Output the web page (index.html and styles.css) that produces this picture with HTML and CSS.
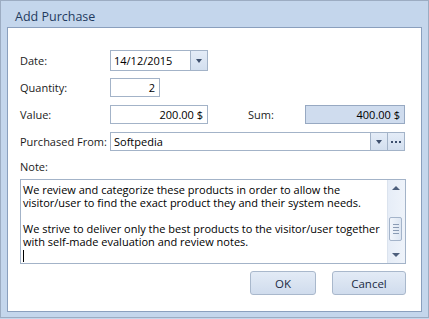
FILE: index.html
```html
<!DOCTYPE html>
<html>
  <head>
    <meta charset="UTF-8">
    <title>Add Purchase</title>
    <link rel="stylesheet" href="styles.css">
  </head>

  <body>
    <div class="window">
      <div class="title">Add Purchase</div>

      <div class="panel">

        <div class="row row-date">
          <label class="lbl">Date:</label>
          <div class="box combo date">
            <span class="val">14/12/2015</span>
            <span class="btn drop"><i class="tri"></i></span>
          </div>
        </div>

        <div class="row">
          <label class="lbl">Quantity:</label>
          <div class="box num qty">2</div>
        </div>

        <div class="row">
          <label class="lbl">Value:</label>
          <div class="box num value">200.00 $</div>
          <label class="lbl-sum">Sum:</label>
          <div class="box num sum">400.00 $</div>
        </div>

        <div class="row">
          <label class="lbl">Purchased From:</label>
          <div class="box combo from">
            <span class="val">Softpedia</span>
            <span class="btn drop"><i class="tri"></i></span>
            <span class="btn more"><i></i><i></i><i></i></span>
          </div>
        </div>

        <div class="row row-note">
          <label class="lbl">Note:</label>
        </div>

        <div class="note">
          <div class="note-text">
            <p>We review and categorize these products in order to allow the visitor/user to find the exact product they and their system needs.</p>
            <p>&nbsp;</p>
            <p>We strive to deliver only the best products to the visitor/user together with self-made evaluation and review notes.</p>
            <p><span class="caret"></span></p>
          </div>
          <div class="scroll">
            <span class="arrow up"></span>
            <span class="thumb"><i></i><i></i><i></i><i></i></span>
            <span class="arrow down"></span>
          </div>
        </div>

        <div class="actions">
          <button class="button ok">OK</button>
          <button class="button cancel">Cancel</button>
        </div>
      </div>
    </div>
  </body>
</html>
```

FILE: styles.css
```css
html, body {
  margin: 0;
  padding: 0;
  background-color: #c4d6ec;
}

body {
  font-family: 'Open Sans', 'Noto Sans', sans-serif;
  font-size: 11px;
  color: #1b1b1b;
}

.window {
  width: 429px;
  height: 318px;
  box-sizing: border-box;
  border: 1px solid #9cacc2;
  background-color: #c4d6ec;
  padding: 0 6px 0 6px;
}

.title {
  height: 26px;
  line-height: 32px;
  padding-left: 8px;
  font-size: 12.5px;
  color: #1f3a5e;
}

.panel {
  width: 415px;
  height: 285px;
  box-sizing: border-box;
  background-color: white;
  border: 1px solid #8a9fbd;
  padding: 22px 16px 0 12px;
}

.row {
  display: flex;
  flex-direction: row;
  align-items: center;
  height: 19px;
  margin-bottom: 8px;
  white-space: nowrap;
}

.row-date {
  height: 21px;
  margin-bottom: 7px;
}

.row-note {
  height: 15px;
  margin-top: 1px;
  margin-bottom: 5px;
}

.lbl {
  width: 90px;
}

.lbl-sum {
  width: 57px;
  margin-left: 40px;
}

.box {
  height: 100%;
  box-sizing: border-box;
  border: 1px solid #a3b3c8;
  background-color: white;
  display: flex;
  align-items: center;
  color: #000;
}

.num {
  justify-content: flex-end;
  padding-right: 4px;
}

.date { width: 98px; }
.qty { width: 50px; }
.value { width: 98px; }
.from { width: 295px; }

.sum {
  width: 100px;
  background-color: #cfdcee;
  border-color: #97a9c2;
}

.combo .val {
  flex: 1;
  padding-left: 3px;
}

.combo .btn {
  width: 17px;
  height: 100%;
  box-sizing: border-box;
  border-left: 1px solid #a3b3c8;
  background: linear-gradient(#e4ecf7, #d3dfef);
  display: flex;
  align-items: center;
  justify-content: center;
}

.tri {
  width: 0;
  height: 0;
  border-left: 3.5px solid transparent;
  border-right: 3.5px solid transparent;
  border-top: 4px solid #3d4f6d;
  margin-top: 1px;
}

.more i {
  display: block;
  width: 2px;
  height: 2px;
  margin: 0 1px;
  background-color: #3d4f6d;
}

.note {
  display: flex;
  flex-direction: row;
  width: 386px;
  height: 85px;
  box-sizing: border-box;
  border: 1px solid #a3b3c8;
}

.note-text {
  flex: 1;
  padding: 3px 0 0 2px;
  color: #000;
  line-height: 13px;
}

.note-text p {
  margin: 0;
}

.caret {
  display: inline-block;
  width: 1px;
  height: 12px;
  background-color: #000;
  vertical-align: middle;
}

.scroll {
  position: relative;
  width: 17px;
  background: linear-gradient(to right, #e6edf7, #eef3fa);
  border-left: 1px solid #dbe3ee;
}

.arrow {
  position: absolute;
  left: 4px;
  width: 0;
  height: 0;
  border-left: 4px solid transparent;
  border-right: 4px solid transparent;
}

.arrow.up {
  top: 6px;
  border-bottom: 4px solid #4d5f7c;
}

.arrow.down {
  bottom: 6px;
  border-top: 4px solid #4d5f7c;
}

.thumb {
  position: absolute;
  left: 1px;
  top: 37px;
  width: 13px;
  height: 24px;
  box-sizing: border-box;
  border: 1px solid #a4b4ca;
  border-radius: 2px;
  background: linear-gradient(to right, #f1f5fb, #dde6f2);
  display: flex;
  flex-direction: column;
  align-items: center;
  justify-content: center;
}

.thumb i {
  display: block;
  width: 6px;
  height: 1px;
  margin: 1px 0;
  background-color: #8a9bb4;
}

.actions {
  display: flex;
  flex-direction: row;
  justify-content: flex-end;
  width: 386px;
  margin-top: 7px;
}

.button {
  height: 24px;
  font-family: 'Open Sans', 'Noto Sans', sans-serif;
  font-size: 11.5px;
  color: #1b2b44;
  border: 1px solid #a9b8cc;
  border-radius: 3px;
  background: linear-gradient(#e3ebf6, #d0dced);
  padding: 0;
}

.ok {
  width: 66px;
  margin-right: 16px;
}

.cancel {
  width: 74px;
}
```
